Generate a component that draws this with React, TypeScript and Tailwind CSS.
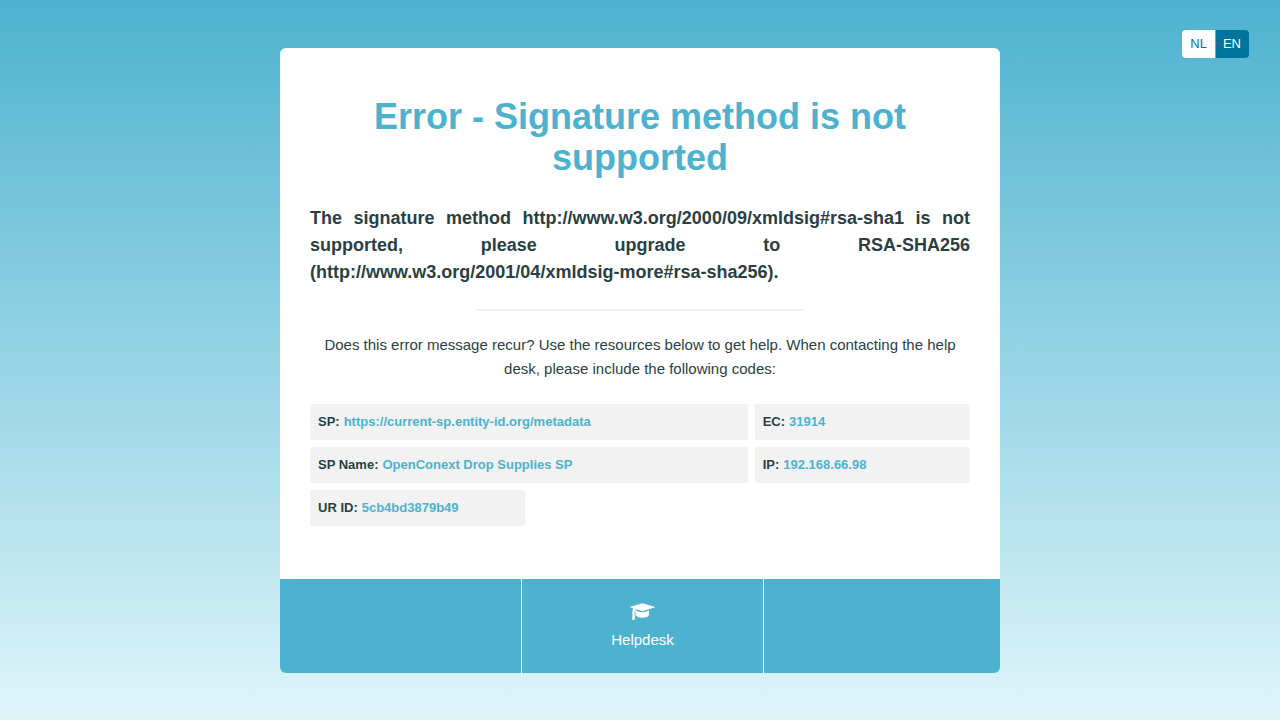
type Code = { label: string; value: string; wide?: boolean };

const codes: Code[] = [
  { label: "SP:", value: "https://current-sp.entity-id.org/metadata", wide: true },
  { label: "EC:", value: "31914" },
  { label: "SP Name:", value: "OpenConext Drop Supplies SP", wide: true },
  { label: "IP:", value: "192.168.66.98" },
  { label: "UR ID:", value: "5cb4bd3879b49" },
];

function LanguageSwitch() {
  return (
    <nav
      aria-label="Language"
      className="absolute top-[30px] right-[31px] flex overflow-hidden rounded text-[13px] leading-7"
    >
      <a href="#nl" className="bg-white px-2 text-[#00749a]">
        NL
      </a>
      <a
        href="#en"
        aria-current="true"
        className="border-l border-[#4db2cf] bg-[#00749a] pr-2 pl-[7px] text-white"
      >
        EN
      </a>
    </nav>
  );
}

function GraduationCap() {
  return (
    <svg viewBox="0 0 25 18" className="h-[18px] w-[25px]" fill="currentColor" aria-hidden="true">
      {/* board */}
      <path d="M12.3 0.2 L24.6 3.7 Q25.1 4 24.6 4.4 L13.2 8.1 Q12.4 8.3 11.5 8.1 L0.4 4.4 Q-0.1 4 0.4 3.7 Z" />
      {/* strap and tassel */}
      <path d="M3.1 4.6 L6 5.6 Q4.4 7.2 4.7 11.6 L5.2 16 Q3.8 17.2 2 16.7 L2.5 11.6 Q2.1 7.2 3.1 4.6 Z" />
      {/* skull cap */}
      <path d="M5.2 7 Q8.6 9.2 12.4 9.2 Q16 9.2 19 7.2 L18.9 12 Q18.4 14.6 12.2 14.7 Q7.2 14.6 5.6 12.2 Z" />
    </svg>
  );
}

function CodeList() {
  return (
    <dl className="mt-[23px] grid grid-cols-3 gap-[7px] text-[13px] leading-[36px] font-bold">
      {codes.map((code) => (
        <div
          key={code.label}
          className={
            code.wide
              ? "col-span-2 flex gap-1 rounded-xs bg-[#f2f2f2] px-2"
              : "flex gap-1 rounded-xs bg-[#f2f2f2] px-2"
          }
        >
          <dt>{code.label}</dt>
          <dd className="text-[#4db2cf]">{code.value}</dd>
        </div>
      ))}
    </dl>
  );
}

export default function App() {
  return (
    <div className="relative min-h-screen bg-linear-to-b/srgb from-[#4db2cf] to-[#dff5fa] px-4 pt-12 pb-[47px] font-['Liberation_Sans',Arial,sans-serif] text-[#2a3f44]">
      <LanguageSwitch />
      <main className="mx-auto w-full max-w-[720px] overflow-hidden rounded-md bg-white">
        <div className="px-[30px] pt-12 pb-[53px]">
          <h1 className="text-center text-4xl leading-[41px] font-bold text-[#4db2cf]">
            Error - Signature method is not supported
          </h1>
          <p className="mt-[27px] text-justify text-lg leading-[27px] font-bold">
            The signature method http://www.w3.org/2000/09/xmldsig#rsa-sha1 is not supported, please
            upgrade to RSA-SHA256 (http://www.w3.org/2001/04/xmldsig-more#rsa-sha256).
          </p>
          <hr className="mx-auto mt-[23px] w-1/2 border-t-2 border-[#f2f2f2]" />
          <p className="mt-[22px] text-center text-[15px] leading-6">
            Does this error message recur? Use the resources below to get help. When contacting the
            help desk, please include the following codes:
          </p>
          <CodeList />
        </div>
        <footer className="grid grid-cols-[242fr_242fr_236fr] bg-[#4db2cf] text-[15px] leading-6 text-white">
          <div className="border-r border-white" />
          <a
            href="#helpdesk"
            className="flex flex-col items-center border-r border-white pt-6 pb-[21px]"
          >
            <GraduationCap />
            <span className="mt-[7px]">Helpdesk</span>
          </a>
          <div />
        </footer>
      </main>
    </div>
  );
}
